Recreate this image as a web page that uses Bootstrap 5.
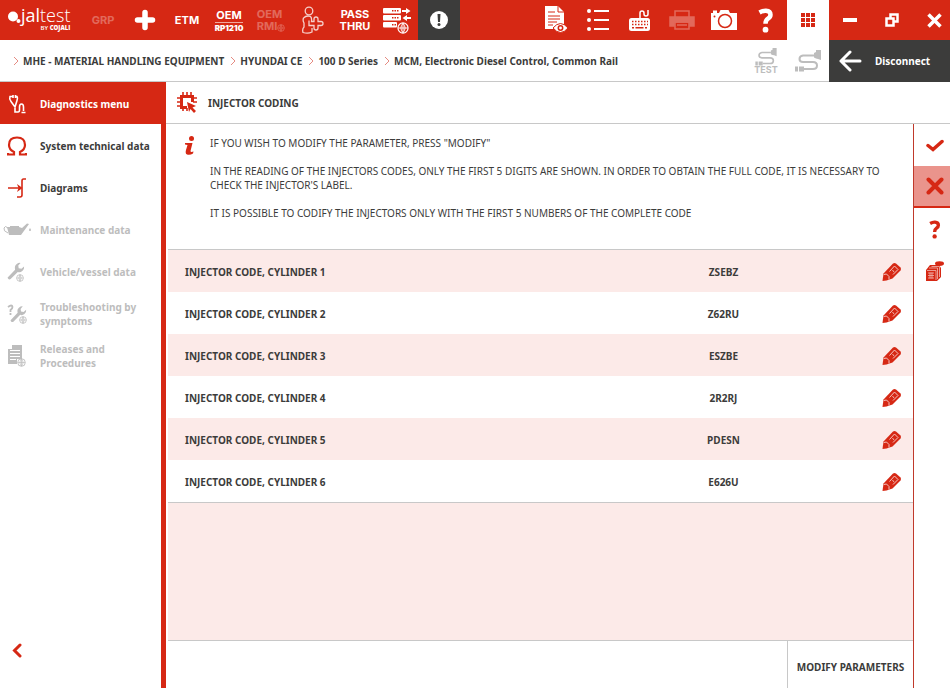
<!DOCTYPE html>
<html lang="en">
<head>
<meta charset="utf-8">
<meta name="viewport" content="width=device-width, initial-scale=1">
<title>Jaltest - Injector coding</title>
<link href="https://cdn.jsdelivr.net/npm/bootstrap@5.3.0/dist/css/bootstrap.min.css" rel="stylesheet">
<style>
:root{--jt-red:#d62814;--jt-dark:#3c3c3b;--jt-pink:#fceae8;--jt-line:#c8c8c8;--jt-off:#bdbdbd;--slot:42px}
body{font-family:"Noto Sans","Open Sans",sans-serif;font-size:10px;line-height:14px;color:var(--jt-dark);background:#fff}
svg{display:block;flex:none}
a{color:inherit;text-decoration:none}
button{border:0;background:none;padding:0;color:inherit;font:inherit}
.topbar{height:40px;background:var(--jt-red);color:#fff}
.slot{width:var(--slot);height:40px;display:flex;flex:none;align-items:center;justify-content:center;font:700 11px/12px Inter,sans-serif}
.slot-off{opacity:.3}
.slot-dark{background:var(--jt-dark)}
.slot-white{background:#fff;color:var(--jt-red)}
.slot-edge{width:37px;padding-left:5px}
.stacked{flex-direction:column;gap:1px}
.tiny{font-size:8px;line-height:8px;font-weight:900}
.rp{border-top:1px solid #f0a79f;padding-top:1px}
.cable-label{font:700 9px/8px Inter,sans-serif}
.brand{width:82px;padding:2px 0 0 8px;font-family:"Open Sans",sans-serif}
.brand-word{font-size:18px;line-height:18px;font-weight:300}
.brand-by{font-size:6px;line-height:8px;text-align:right;font-weight:600}
.pathbar{height:42px;border-bottom:1px solid var(--jt-line)}
.crumbs{font-weight:700;padding-left:13px}
.crumbs li{display:flex;align-items:center;gap:4px;margin-right:6px}
.cable{width:var(--slot);color:var(--jt-off)}
.disconnect{width:121px;background:var(--jt-dark);color:#fff;font-weight:700;padding-left:10px;gap:13px;margin-bottom:-1px}
.side{width:166px;border-right:5px solid var(--jt-red)}
.side-item{height:42px;display:flex;align-items:center;font-weight:700;padding:1px 2px 0 0}
.side-ico{width:34px;margin-right:6px;display:flex;justify-content:center;flex:none;color:var(--jt-red)}
.side-on{background:var(--jt-red);color:#fff;margin-right:-5px}
.side-on .side-ico{color:#fff}
.side-off,.side-off .side-ico{color:var(--jt-off)}
.side-back{height:42px;width:34px;margin-bottom:17px;color:var(--jt-red)}
.page-title{height:42px;border-bottom:1px solid var(--jt-line);font-size:10px;line-height:14px;font-weight:700;padding-left:11px;gap:11px}
.page-title svg,.info svg{color:var(--jt-red)}
.work{padding-left:2px}
.info{height:126px;padding:12px 10px 0 15px;gap:13px;border-bottom:1px solid var(--jt-line)}
.info p{margin-bottom:14px}
.codes{--bs-table-color:var(--jt-dark);color:var(--jt-dark);font-weight:700;border-bottom:1px solid var(--jt-line)}
.codes td,.codes th{height:42px;padding:2px 0 0}
.codes tr:nth-child(odd)>*{background:var(--jt-pink)}
.codes th{padding-left:17px}
.codes .code{width:295px;text-align:center}
.codes .edit{width:var(--slot);color:var(--jt-red)}
.codes .edit button{display:block;margin:0 auto}
.blank{background:var(--jt-pink)}
.foot{height:48px;border-top:1px solid var(--jt-line)}
.modify{width:126px;border-left:1px solid var(--jt-line);font-weight:700;padding-top:4px}
.rail{width:37px;border-left:1px solid #c0392b;color:var(--jt-red)}
.rail button{height:42px;padding-left:5px;display:flex;align-items:center;justify-content:center}
.rail .rail-on{background:#ea948c;border-bottom:2px solid var(--jt-red)}
</style>
<script src="https://cdn.jsdelivr.net/npm/bootstrap@5.3.0/dist/js/bootstrap.bundle.min.js"></script>
</head>
<body class="d-flex flex-column vh-100 overflow-hidden">
<svg width="0" height="0" class="position-absolute" aria-hidden="true">
  <symbol id="pencil" viewBox="0 0 20 20"><path fill="currentColor" d="M.5 19 1.500 11.500 11 1.500Q12.500.3 14 1.500L18.500 5.500Q19.500 7 18.500 8.500L10.500 16.500 4.500 18.500Z"/><path fill="none" stroke="#f9d5d1" stroke-width=".9" d="M7.500 9.500 12.500 4 16 7.500 11 12.500M1.800 12.500 4.500 12 7 14.500 7 17.500"/><path fill="none" stroke="#f9d5d1" stroke-width=".8" d="m10.500 8 1.500 2"/></symbol>
  <symbol id="chev" viewBox="0 0 6 10"><path fill="none" stroke="#e58b82" stroke-width="1" d="m1 1 4 4-4 4"/></symbol>
  <symbol id="cable" viewBox="0 0 26 22"><path fill="none" stroke="currentColor" stroke-width="2" d="M9 19h9q4 0 4-3.500T18 12H8q-3.500 0-3.500-3T8 5.500h11"/><path fill="currentColor" d="M0 16.500h3v5H0zM4 16.500h5v5H4zM19 3l2-1V0h5v10l-3-1-2-.5-2-1z"/></symbol>
  <symbol id="globe" viewBox="0 0 10 10"><circle cx="5" cy="5" r="4.200" fill="none" stroke="currentColor"/><path fill="none" stroke="currentColor" stroke-width=".8" d="M1 5h8M5 1v8M5 1Q1.500 5 5 9M5 1q3.500 4 0 8"/></symbol>
  <symbol id="wrench" viewBox="0 0 20 20"><path fill="currentColor" d="M1 17 9 8.500Q8 4.500 10.500 2.500T15 1l-2.500 3 .5 3 3 .5L19 5q.5 3-2 5t-5 1L4 19q-1.500 1-2.700-.3T1 17z"/></symbol>
</svg>

<header class="topbar d-flex">
  <a class="brand d-flex" href="#" aria-label="Jaltest by Cojali">
    <svg class="mt-1" width="13" height="18" viewBox="0 0 13 18"><circle cx="5" cy="10.500" r="5" fill="#fff"/><circle cx="10.500" cy="15" r="2" fill="#fff"/></svg>
    <span class="d-flex flex-column pt-1"><span class="brand-word"><b>jal</b>test</span><span class="brand-by">BY <b>COJALI</b></span></span>
  </a>
  <button class="slot"><span class="slot-off">GRP</span></button>
  <button class="slot" aria-label="Add"><svg width="22" height="22" viewBox="0 0 22 22"><path stroke="#fff" stroke-width="5.500" stroke-linecap="round" d="M11 3.500v15M3.500 11h15"/></svg></button>
  <button class="slot">ETM</button>
  <button class="slot stacked"><span>OEM</span><span class="tiny rp">RP1210</span></button>
  <button class="slot"><span class="slot-off d-flex flex-column text-start"><span>OEM</span><span class="d-flex align-items-end">RMI<svg width="8" height="8"><use href="#globe"/></svg></span></span></button>
  <button class="slot" aria-label="Assistance"><svg width="24" height="28" viewBox="0 0 24 28" fill="none" stroke="#f6cfca" stroke-width="1.300"><circle cx="8" cy="5" r="3.800"/><path d="M2.500 12q3-3 7-1.500 1.500 1.500 1 5h2.500v-2.500q0-2 2-2t2 2v2.500h3q2 0 2 2t-2 2h-3v2.500q0 2-2 2t-2-2v-2.500H8v-5M2.500 12q-1 2.500.5 5v4q-2 2-1 5.500 5 1.500 9-.5V22"/></svg></button>
  <button class="slot"><span>PASS<br>THRU</span></button>
  <button class="slot" aria-label="Servers"><svg width="28" height="27" viewBox="0 0 28 27"><g fill="#fff"><rect y="1" width="18" height="5.500" rx="1"/><rect y="8" width="18" height="5.500" rx="1"/><rect y="15" width="14" height="5.500" rx="1"/><path d="M19 3h4V1l4.500 3L23 7V5h-4zM28 10v2h-4v2l-4.500-3L24 8v2z"/></g><path stroke="#d62814" stroke-width="1.500" stroke-dasharray="1.500 1" d="M9 3.700h7M9 10.700h7M9 17.700h5"/><svg x="14" y="15" width="12" height="12" color="#fff"><use href="#globe"/></svg></svg></button>
  <button class="slot slot-dark" aria-label="Alerts"><svg width="18" height="18" viewBox="0 0 18 18"><circle cx="9" cy="9" r="9" fill="#fff"/><path fill="#3c3c3b" d="M7.500 3h3L10 11H8z"/><circle cx="9" cy="13.500" r="1.500" fill="#3c3c3b"/></svg></button>
  <div class="d-flex ms-auto">
    <button class="slot" aria-label="Report"><svg width="24" height="28" viewBox="0 0 24 28"><path fill="#fff" d="M1 0h13l6 6v17H1z"/><path fill="none" stroke="#d62814" d="M14 0v6h6M4 6h7M4 10h12M4 13h12M4 16h9M4 19h5"/><path fill="#fff" stroke="#d62814" d="M9 22q7.500-9 15 0-7.500 9-15 0z"/><circle cx="16.500" cy="22" r="2.200" fill="#fff" stroke="#d62814" stroke-width="1.500"/></svg></button>
    <button class="slot" aria-label="List"><svg width="24" height="24" viewBox="0 0 24 24"><g fill="#fff"><circle cx="3" cy="3" r="2"/><circle cx="3" cy="12" r="2"/><circle cx="3" cy="21" r="2"/></g><path stroke="#fff" stroke-width="2" d="M8 3h15M8 12h15M8 21h15"/></svg></button>
    <button class="slot" aria-label="Keyboard"><svg width="24" height="24" viewBox="0 0 24 24"><rect x="1" y="10" width="21" height="13" rx="2.500" fill="#fff"/><path fill="none" stroke="#fff" stroke-width="1.500" d="M12 10V5q0-2 2-2t2 2v1q0 2 2 2t2-2V2"/><path stroke="#d62814" stroke-width="1.500" stroke-dasharray="1.500 1.500" d="M4 13.500h16M4 16.500h16"/><path stroke="#d62814" stroke-width="1.500" d="M4 19.800h2M7.500 19.800h8M17 19.800h2"/></svg></button>
    <button class="slot" aria-label="Print" disabled><svg class="slot-off" width="26" height="20" viewBox="0 0 26 20" fill="none" stroke="#fff" stroke-width="1.500"><path d="M6 7V1h14v6"/><path fill="#fff" d="M1 7h24v9h-4v-4H5v4H1z"/><path d="M6 12h14v7H6zM8 15h10"/></svg></button>
    <button class="slot" aria-label="Screenshot"><svg width="26" height="22" viewBox="0 0 26 22"><path fill="#fff" d="M0 4h2V1.500h4V4h2l1.500-3h8L19 4h7v17H0z"/><circle cx="14" cy="12" r="6.500" fill="#fff" stroke="#d62814" stroke-width="1.500"/><circle cx="3.500" cy="7.500" r="1" fill="#d62814"/></svg></button>
    <button class="slot" aria-label="Help"><svg width="16" height="25" viewBox="0 0 16 25"><path fill="none" stroke="#fff" stroke-width="4.500" d="M1.500 4.500Q5 2.500 8 2.700q4.500.3 4.500 4 0 2.300-2.500 4t-2.500 5"/><circle cx="7.500" cy="21.700" r="2.900" fill="#fff"/></svg></button>
    <button class="slot slot-white" aria-label="Apps"><svg width="14" height="14" viewBox="0 0 14 14"><path stroke="currentColor" stroke-width="4" stroke-dasharray="4 1" d="M0 2h14M0 7h14M0 12h14"/></svg></button>
    <button class="slot" aria-label="Minimize"><svg width="14" height="4"><path fill="#fff" d="M0 0h14v4H0z"/></svg></button>
    <button class="slot" aria-label="Restore"><svg width="14" height="14" viewBox="0 0 14 14" fill="none" stroke="#fff" stroke-width="2.500"><path d="M1.500 5.500h7v7h-7z"/><path d="M5.500 5V1.500h7v7H9"/></svg></button>
    <button class="slot slot-edge" aria-label="Close"><svg width="15" height="15" viewBox="0 0 15 15"><path stroke="#fff" stroke-width="3.500" d="m1.500 1.500 12 12m0-12-12 12"/></svg></button>
  </div>
</header>

<div class="pathbar d-flex">
  <nav class="d-flex align-items-center" aria-label="breadcrumb">
    <ol class="crumbs list-unstyled d-flex mb-0">
      <li><svg width="6" height="10"><use href="#chev"/></svg><a href="#">MHE - MATERIAL HANDLING EQUIPMENT</a></li>
      <li><svg width="6" height="10"><use href="#chev"/></svg><a href="#">HYUNDAI CE</a></li>
      <li><svg width="6" height="10"><use href="#chev"/></svg><a href="#">100 D Series</a></li>
      <li><svg width="6" height="10"><use href="#chev"/></svg><a href="#">MCM, Electronic Diesel Control, Common Rail</a></li>
    </ol>
  </nav>
  <div class="d-flex ms-auto">
    <button class="cable d-flex flex-column align-items-center justify-content-center" disabled><svg width="22" height="18"><use href="#cable"/></svg><span class="cable-label">TEST</span></button>
    <button class="cable d-flex align-items-center justify-content-center" aria-label="Connection" disabled><svg width="26" height="22"><use href="#cable"/></svg></button>
    <button class="disconnect d-flex align-items-center"><svg width="23" height="22" viewBox="0 0 23 22"><path fill="none" stroke="#fff" stroke-width="3" stroke-linecap="round" stroke-linejoin="round" d="M11 2 2 11l9 9M2 11h19"/></svg>Disconnect</button>
  </div>
</div>

<div class="d-flex flex-grow-1">
  <nav class="side d-flex flex-column flex-shrink-0" aria-label="Main menu">
    <a class="side-item side-on" href="#"><span class="side-ico"><svg width="18" height="20" viewBox="0 0 18 20" fill="none" stroke="currentColor" stroke-width="1.600"><path d="M5 2.500H2Q1 5 3 7.500L7 13l2-6.500q1-2.500 0-4H7M5 1v3M7.500 1v3M7 12v6h3q1.500 0 1.500-2v-3q0-3 2-3t2 3v4M13.500 18.500h4"/></svg></span>Diagnostics menu</a>
    <a class="side-item" href="#"><span class="side-ico"><svg width="20" height="20" viewBox="0 0 20 20"><path fill="none" stroke="currentColor" stroke-width="2.200" d="M1 17v1.500h6V16Q2 13.500 2 9q0-7.500 8-7.500T18 9q0 4.500-5 7v2.500h6V17"/></svg></span>System technical data</a>
    <a class="side-item" href="#"><span class="side-ico"><svg width="19" height="20" viewBox="0 0 19 20"><path fill="none" stroke="currentColor" stroke-width="1.600" d="M0 10h13M18 1h-2.500Q14 1 14 3v14q0 2-2 2H9"/><path fill="currentColor" d="m9 6 5.500 4L9 14l1.500-4z"/></svg></span>Diagrams</a>
    <a class="side-item side-off" href="#"><span class="side-ico"><svg width="28" height="13" viewBox="0 0 28 13"><path fill="currentColor" d="M4 4h3V3h9v1l3 1 5-4.500 2 .5-8 11H6zM27 5q2 3 0 3t0-3z"/><path fill="none" stroke="currentColor" d="M5 10Q0 8 1 5t4 0"/></svg></span>Maintenance data</a>
    <a class="side-item side-off" href="#"><span class="side-ico"><svg width="20" height="20" viewBox="0 0 20 20"><svg width="18" height="18"><use href="#wrench"/></svg><svg x="9" y="12" width="8" height="8"><use href="#globe"/></svg></svg></span>Vehicle/vessel data</a>
    <a class="side-item side-off" href="#"><span class="side-ico"><svg width="20" height="20" viewBox="0 0 20 20"><svg x="3" y="1" width="17" height="18"><use href="#wrench"/></svg><path fill="none" stroke="currentColor" stroke-width="1.800" d="M1 3q4-3 4.500 0 0 1.500-2 3v2M3.500 9v2"/><svg x="12" y="12" width="8" height="8"><use href="#globe"/></svg></svg></span>Troubleshooting by symptoms</a>
    <a class="side-item side-off" href="#"><span class="side-ico"><svg width="18" height="22" viewBox="0 0 18 22"><path fill="currentColor" d="M4 0h10v14H9v5H0V4h4z"/><path stroke="#fff" d="M2 5.500h10M2 8.500h10M2 11.500h10M2 14.500h6"/><svg x="9" y="13" width="9" height="9"><use href="#globe"/></svg></svg></span>Releases and Procedures</a>
    <button class="side-back mt-auto d-flex align-items-center justify-content-center" aria-label="Collapse menu"><svg width="10" height="15" viewBox="0 0 10 15"><path fill="none" stroke="currentColor" stroke-width="3" stroke-linecap="round" d="M8 2 2.500 7.500 8 13"/></svg></button>
  </nav>

  <div class="d-flex flex-column flex-grow-1">
    <h1 class="page-title d-flex align-items-center mb-0"><svg width="20" height="21" viewBox="0 0 20 21"><path fill="none" stroke="currentColor" stroke-width="3" d="M10 15.500H4.500V4.500h11V10"/><path stroke="currentColor" stroke-width="1.600" d="M6 0v4M10 0v4M14 0v4M6 16v3M10 16v3M0 6h4M0 10h4M0 14h4M16 6h4M16 10h4"/><path fill="currentColor" d="m10 10 9 4-3.500 1.500L19 19l-2 2-3.500-4-1.500 3z"/></svg>INJECTOR CODING</h1>
    <div class="d-flex flex-grow-1">
      <main class="work d-flex flex-column flex-grow-1">
        <div class="info d-flex">
          <svg width="14" height="19" viewBox="0 0 14 19"><circle cx="8.500" cy="2.500" r="2.500" fill="currentColor"/><path fill="currentColor" d="M2 7h7.500L7.500 15q0 1.500 3 .5l-.5 2q-3 2-6 1-2-.7-1-4.500l1.500-5L2 8.500z"/></svg>
          <div>
            <p>IF YOU WISH TO MODIFY THE PARAMETER, PRESS "MODIFY"</p>
            <p>IN THE READING OF THE INJECTORS CODES, ONLY THE FIRST 5 DIGITS ARE SHOWN. IN ORDER TO OBTAIN THE FULL CODE, IT IS NECESSARY TO CHECK THE INJECTOR'S LABEL.</p>
            <p>IT IS POSSIBLE TO CODIFY THE INJECTORS ONLY WITH THE FIRST 5 NUMBERS OF THE COMPLETE CODE</p>
          </div>
        </div>
        <table class="codes table table-borderless align-middle mb-0">
          <tbody>
            <tr><th scope="row">INJECTOR CODE, CYLINDER 1</th><td class="code">ZSEBZ</td><td class="edit"><button aria-label="Edit cylinder 1"><svg width="20" height="20"><use href="#pencil"/></svg></button></td></tr>
            <tr><th scope="row">INJECTOR CODE, CYLINDER 2</th><td class="code">Z62RU</td><td class="edit"><button aria-label="Edit cylinder 2"><svg width="20" height="20"><use href="#pencil"/></svg></button></td></tr>
            <tr><th scope="row">INJECTOR CODE, CYLINDER 3</th><td class="code">ESZBE</td><td class="edit"><button aria-label="Edit cylinder 3"><svg width="20" height="20"><use href="#pencil"/></svg></button></td></tr>
            <tr><th scope="row">INJECTOR CODE, CYLINDER 4</th><td class="code">2R2RJ</td><td class="edit"><button aria-label="Edit cylinder 4"><svg width="20" height="20"><use href="#pencil"/></svg></button></td></tr>
            <tr><th scope="row">INJECTOR CODE, CYLINDER 5</th><td class="code">PDESN</td><td class="edit"><button aria-label="Edit cylinder 5"><svg width="20" height="20"><use href="#pencil"/></svg></button></td></tr>
            <tr><th scope="row">INJECTOR CODE, CYLINDER 6</th><td class="code">E626U</td><td class="edit"><button aria-label="Edit cylinder 6"><svg width="20" height="20"><use href="#pencil"/></svg></button></td></tr>
          </tbody>
        </table>
        <div class="blank flex-grow-1"></div>
        <footer class="foot d-flex justify-content-end"><button class="modify">MODIFY PARAMETERS</button></footer>
      </main>
      <aside class="rail d-flex flex-column flex-shrink-0">
        <button aria-label="Accept"><svg width="18" height="13" viewBox="0 0 18 13"><path fill="none" stroke="currentColor" stroke-width="3.500" stroke-linecap="round" d="m2 6.500 5 4 9-8"/></svg></button>
        <button class="rail-on" aria-label="Cancel"><svg width="18" height="18" viewBox="0 0 18 18"><path stroke="currentColor" stroke-width="4" stroke-linecap="round" d="m2.500 2.500 13 13m0-13-13 13"/></svg></button>
        <button aria-label="Help"><svg width="12" height="19" viewBox="0 0 16 25"><path fill="none" stroke="currentColor" stroke-width="4.500" d="M1.500 4.500Q5 2.500 8 2.700q4.500.3 4.500 4 0 2.300-2.500 4t-2.500 5"/><circle cx="7.500" cy="21.700" r="2.900" fill="currentColor"/></svg></button>
        <button aria-label="Modules"><svg width="18" height="20" viewBox="0 0 18 20"><path fill="currentColor" d="M0 9 4 4h9l2 3v9l-4 4H0z"/><ellipse cx="13.500" cy="2.500" rx="4.500" ry="2.300" fill="currentColor"/><path fill="currentColor" d="m11 4 1 3 3-3z"/><path fill="none" stroke="#f3b8b1" stroke-width=".8" d="M1 9.500h9V19M3 7h8.500v11M5.500 5.500h8V16M2 12h6M2 14.500h6M2 17h6M4 11.500v6M6 11.500v6"/></svg></button>
      </aside>
    </div>
  </div>
</div>
</body>
</html>
